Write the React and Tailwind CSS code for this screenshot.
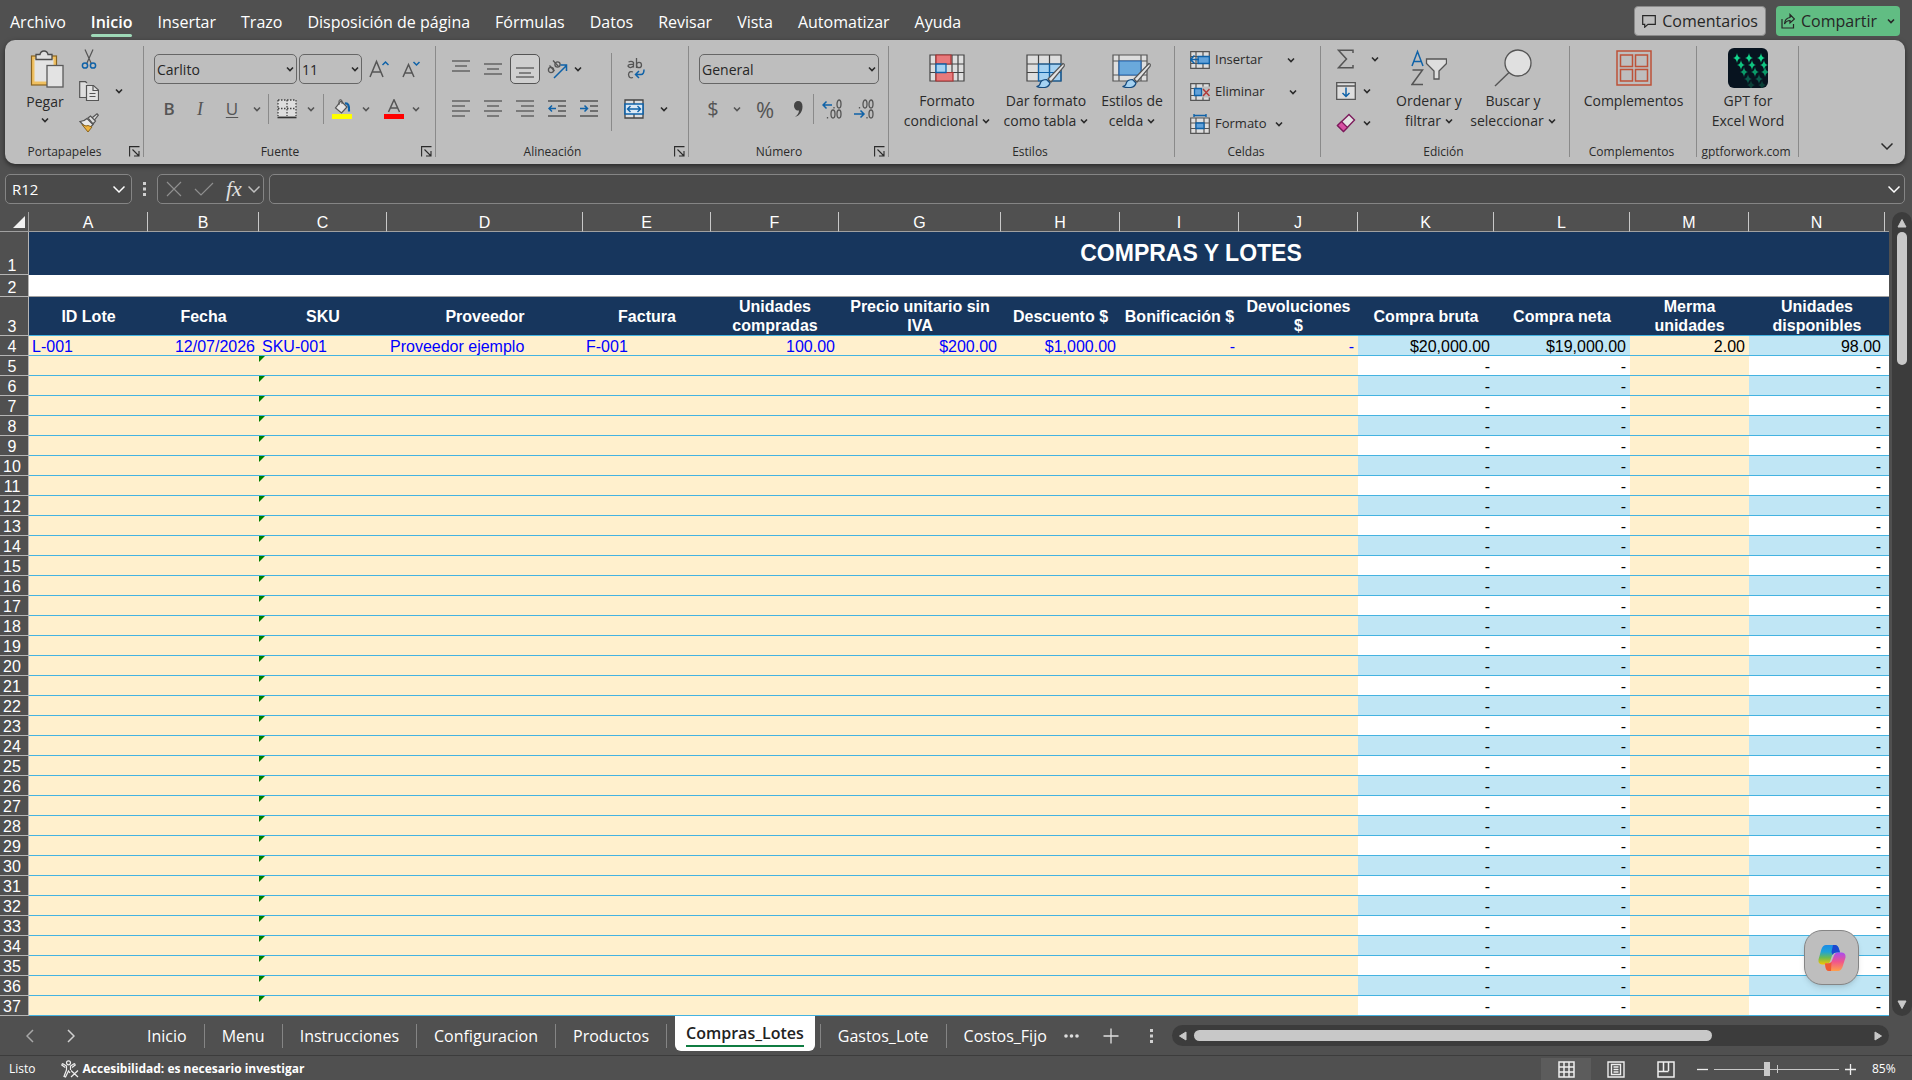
import React from "react";

const INK = "#555555";
const BLUE = "#0f62a8";

const Chevron = ({ className = "" }) => (
  <svg className={`h-2 w-2 shrink-0 ${className}`} viewBox="0 0 8 8" fill="none" stroke="currentColor" strokeWidth="1.6">
    <path d="M1 2.5 4 5.5 7 2.5" />
  </svg>
);

const BigChevron = ({ className = "" }) => (
  <svg className={`h-3 w-3 shrink-0 ${className}`} viewBox="0 0 12 12" fill="none" stroke="currentColor" strokeWidth="1.5">
    <path d="M.5 3.5 6 9l5.5-5.5" />
  </svg>
);

const Launcher = () => (
  <button aria-label="Más opciones" className="absolute right-1 bottom-[7px] text-[#2a2a2a]">
    <svg className="h-[11px] w-[11px]" viewBox="0 0 11 11" fill="none" stroke="currentColor" strokeWidth="1.1">
      <path d="M.6 10.5V.6h9.9M3.5 3.5l6 6M10 5v5H5" />
    </svg>
  </button>
);

const Svg = ({ w = 20, h = 20, box, children }) => (
  <svg width={w} height={h} viewBox={box || `0 0 ${w} ${h}`} fill="none" className="shrink-0">
    {children}
  </svg>
);

const PasteIcon = () => (
  <Svg w={34} h={38}>
    <rect x="1.5" y="6" width="25" height="29" fill="#f0c060" stroke="#8a6420" strokeWidth="1.2" />
    <rect x="4.500" y="9" width="19" height="22.500" fill="#e3e3e3" />
    <path d="M6 9.500V4.500h4C10.500 2 12 1 14 1s3.500 1 4 3.500h4v5z" fill="#dedede" stroke="#4b4b4b" strokeWidth="1.300" />
    <rect x="17" y="15.500" width="16" height="21.500" fill="#e3e3e3" stroke="#5a5a5a" strokeWidth="1.300" />
  </Svg>
);

const CutIcon = () => (
  <Svg w={16} h={20}>
    <path d="M4 .5 10.500 15M12 .5 5.500 15" stroke={INK} strokeWidth="1.200" />
    <circle cx="4" cy="16.500" r="2.600" stroke={BLUE} strokeWidth="1.500" />
    <circle cx="12" cy="16.500" r="2.600" stroke={BLUE} strokeWidth="1.500" />
  </Svg>
);

const CopyIcon = () => (
  <Svg>
    <path d="M7 16.500H.7V.7h5.800L8 2" fill="#dedede" stroke={INK} strokeWidth="1.200" />
    <path d="M7.500 4.500h7l5 4.500v10.500h-12z" fill="#e3e3e3" stroke={INK} strokeWidth="1.200" />
    <path d="M14 4.500v5h5M10.500 12.500h6M10.500 15.500h6" stroke={INK} strokeWidth="1.200" />
  </Svg>
);

const BrushIcon = () => (
  <Svg>
    <path d="M1 8.500 9 17l5-5.500L8 5.500C6 7.500 3.500 8.500 1 8.500z" fill="#e8e8e8" stroke={INK} strokeWidth="1.200" />
    <path d="M3 11.500 9 19l4-5-4-1.500-2 .5z" fill="#eeb23c" stroke="#8a6420" />
    <path d="m9 5 2.500-2 5 5-2.500 3zM13.500 4.500 18 .8l1.300 1.400L15.500 7" fill="#dcdcdc" stroke={INK} strokeWidth="1.200" />
  </Svg>
);

const GrowFont = ({ down }) => (
  <Svg w={20} h={20}>
    <path d={down ? "M1 18 6.500 5.500 12 18M3 14h7" : "M1 18 7.500 2.500 14 18M3.500 13h8"} stroke={INK} strokeWidth="1.500" />
    <path d={down ? "M11.500 3 14.500 6l3-3" : "m13.500 6 3-3 3 3"} stroke={BLUE} strokeWidth="1.500" />
  </Svg>
);

const BordersIcon = () => (
  <Svg>
    <rect x="1" y="1" width="18" height="16" fill="#dedede" />
    <path d="M1 1h18v16M1 1v16M10 1v16M1 9.500h18" stroke="#444" strokeWidth="1.300" strokeDasharray="1.500 1.500" />
    <path d="M.5 18.500h19" stroke="#333" strokeWidth="1.600" />
  </Svg>
);

const FillIcon = () => (
  <Svg>
    <path d="M9 2 15 8 9.500 14 3.500 9z" fill="#e3e3e3" stroke={INK} strokeWidth="1.200" />
    <path d="M7 6V1.500Q8.500-.5 10 1.500V5" stroke={INK} />
    <path d="M13 4.500c3-.5 4.500 2 4 8" stroke={BLUE} strokeWidth="2.200" />
    <path d="M0 15h20v5H0z" fill="#ff0" />
  </Svg>
);

const FontColorIcon = () => (
  <Svg>
    <path d="M4.500 13 10 .8 15.500 13M6.500 9h7" stroke={INK} strokeWidth="1.500" />
    <path d="M0 15h20v5H0z" fill="#f00" />
  </Svg>
);

const Lines = ({ rows }) => (
  <Svg w={18} h={18}>
    {rows.map(([x1, x2, y]) => (
      <path key={y} d={`M${x1} ${y}H${x2}`} stroke={INK} strokeWidth="1.300" />
    ))}
  </Svg>
);

const IndentIcon = ({ right }) => (
  <Svg w={18} h={18}>
    <path d="M0 1h18M10 6h8M10 11h8M0 16h18" stroke={INK} strokeWidth="1.300" />
    <path d={right ? "M0 8.500h7M4.500 5.500l3 3-3 3" : "M8 8.500H1.500M4 5.500 1 8.500l3 3"} stroke={BLUE} strokeWidth="1.500" />
  </Svg>
);

const OrientIcon = () => (
  <Svg w={22} h={22}>
    <g stroke={INK} strokeWidth="1.300">
      <circle cx="5" cy="12" r="2.600" />
      <path d="m3.500 7.500 5 5.500M7 2.500l5.500 6" />
      <circle cx="11.500" cy="6.500" r="2.600" />
    </g>
    <path d="M8 20 20.500 7.500M14.500 7h6v6" stroke={BLUE} strokeWidth="1.500" />
  </Svg>
);

const WrapIcon = () => (
  <Svg w={18} h={22}>
    <g stroke={INK} strokeWidth="1.300">
      <path d="M1.500 4q3-1.500 5 .5v5M6.500 6.500Q1 6 1 8.200 3 11 6.500 8M9.500 0v10" />
      <ellipse cx="12" cy="7" rx="2.500" ry="2.700" />
      <path d="M6 14q-4-1.500-4.500 2.500Q2 21 6 19.500" />
    </g>
    <path d="M17 11.500q0 5-3 5H8.500M12 13l-3.500 3.500L12 20" stroke={BLUE} strokeWidth="1.500" />
  </Svg>
);

const MergeIcon = () => (
  <Svg>
    <path d="M1 1h18v18H1zM10 1v18" fill="#dedede" stroke="#444" strokeWidth="1.300" />
    <path d="M1 5h18v10H1z" fill="#dbe9f5" stroke={BLUE} strokeWidth="1.600" />
    <path d="M3.500 10h13M6.500 7l-3 3 3 3M13.500 7l3 3-3 3" stroke={BLUE} strokeWidth="1.400" />
  </Svg>
);

const DecimalIcon = ({ less }) => (
  <Svg w={20} h={20}>
    <g stroke={INK} strokeWidth="1.300">
      {less ? (
        <>
          <ellipse cx="11" cy="5" rx="2" ry="4" />
          <ellipse cx="17" cy="5" rx="2" ry="4" />
          <ellipse cx="17" cy="15" rx="2" ry="4" />
          <path d="M5.500 8v1.500M13 18v1.500" />
        </>
      ) : (
        <>
          <ellipse cx="17" cy="5" rx="2" ry="4" />
          <ellipse cx="11" cy="15" rx="2" ry="4" />
          <ellipse cx="17" cy="15" rx="2" ry="4" />
          <path d="M12 8v1.500M5.500 18v1.500" />
        </>
      )}
    </g>
    <path d={less ? "M0 15h10M6.500 11.500 10 15l-3.500 3.500" : "M10 6H1M4.500 2.500 1 6l3.500 3.500"} stroke={BLUE} strokeWidth="1.500" />
  </Svg>
);

const ArtBrush = () => (
  <g>
    <path d="M37 9.500 22 25l3 3L38 12.500q1-2.500-1-3z" fill="#e3e3e3" stroke={INK} strokeWidth="1.200" />
    <path d="M10.500 32.500q3 0 4-4 1.500-3 6-3l3.500 3.500q-1 4-5.500 4.500-5 .5-8-1z" fill="#a5d2f2" stroke="#154a7d" strokeWidth="1.200" />
  </g>
);

const ConditionalIcon = () => (
  <Svg w={36} h={28}>
    <rect x="1" y="1" width="34" height="26" fill="#dedede" />
    <path d="M1 1h34v26H1zM7 1v26M23 1v26M29 1v26M1 10h34M1 18.500h34" stroke="#444" strokeWidth="1.200" />
    <path d="M7 1h15v9H7zM7 18.500h17V27H7z" fill="#e8797b" stroke="#a33" strokeWidth="1.200" />
    <path d="M7 10h10v8.500H7z" fill="#a5d2f2" stroke={BLUE} strokeWidth="1.300" />
  </Svg>
);

const TableStyleIcon = () => (
  <Svg w={40} h={40} box="0 -6 40 40">
    <path d="M1 1h34v26H1z" fill="#dedede" />
    <path d="M12 10h23v17H12z" fill="#a5d2f2" />
    <path d="M1 1h34v26H1zM12.500 1v26M23.500 1v26M1 10h34M1 18.500h34" stroke="#444" strokeWidth="1.200" />
    <path d="M12.500 10H35v17H12.500zM23.500 10v17M12.500 18.500H35" stroke={BLUE} strokeWidth="1.200" />
    <ArtBrush />
  </Svg>
);

const CellStyleIcon = () => (
  <Svg w={40} h={40} box="0 -6 40 40">
    <path d="M1 1h34v26H1zM7 1v26M29 1v26M1 7h34M1 21h34" fill="#dedede" stroke={INK} strokeWidth="1.200" />
    <path d="M7 7h22v14H7z" fill="#6aa9dc" stroke="#2565ae" strokeWidth="1.200" />
    <ArtBrush />
  </Svg>
);

const CellIcon = ({ kind }) => (
  <Svg>
    <path d={kind === "format" ? "M.7 4h18.600v15.300H.7zM.7 9h18.600M.7 14.500h18.600M6 4v15M14 4v15" : "M.7 1.700h18.600v16.600H.7zM.7 6.500h18.600M.7 13.500h18.600M6 1.700v16.600M13 1.700v16.600"} fill="#dedede" stroke={INK} strokeWidth="1.200" />
    {kind === "insert" && (
      <>
        <path d="M8 6.500h11.300v7H8z" fill="#62a2da" stroke={BLUE} strokeWidth="1.300" />
        <path d="M9 9.500H1M4.500 5.500l-4 4 4 4" stroke={BLUE} strokeWidth="1.600" />
      </>
    )}
    {kind === "delete" && (
      <>
        <path d="M12 4.500h8v11h-8z" fill="#bebebe" />
        <path d="M4.500 6.500h7v7h-7z" fill="#62a2da" stroke={BLUE} strokeWidth="1.300" />
        <path d="m13 7 6.500 7M19.500 7 13 14" stroke="#b03a3a" strokeWidth="1.500" />
      </>
    )}
    {kind === "format" && (
      <>
        <path d="M6 9h8v5.500H6z" fill="#62a2da" stroke={BLUE} strokeWidth="1.300" />
        <path d="M4 1.500h12M4 0v3M16 0v3" stroke={BLUE} strokeWidth="1.400" />
      </>
    )}
  </Svg>
);

const SumIcon = () => (
  <Svg w={18} h={20}>
    <path d="M16 4V1.200H1.500L9.500 10l-8 8.800H16V16" stroke={INK} strokeWidth="1.500" />
  </Svg>
);

const FillDownIcon = () => (
  <Svg>
    <path d="M.7 1.700h18.600v16.600H.7zM.7 5h18.600" fill="#dedede" stroke={INK} strokeWidth="1.300" />
    <path d="M10 6.500v9M6.500 12l3.500 3.500 3.500-3.500" stroke={BLUE} strokeWidth="1.500" />
  </Svg>
);

const EraserIcon = () => (
  <Svg>
    <path d="M13 1.500 18.500 7 7.500 18.500 1.500 12.500z" fill="#e3e3e3" stroke="#7c1a5b" strokeWidth="1.400" />
    <path d="M5.500 8.500 11.500 14.500 7.500 18.500 1.500 12.500z" fill="#d850a4" stroke="#7c1a5b" strokeWidth="1.200" />
  </Svg>
);

const SortIcon = () => (
  <Svg w={36} h={38}>
    <path d="M1 17 6.500 2.500 12 17M3 12.500h7" stroke={BLUE} strokeWidth="1.500" />
    <path d="M1.500 21h10L1 35.500h11" stroke={INK} strokeWidth="1.500" />
    <path d="M15.500 10h20v4.500L28 22v8h-5v-8l-7.500-7.500z" fill="#dedede" stroke={INK} strokeWidth="1.300" />
  </Svg>
);

const SearchIcon = () => (
  <Svg w={38} h={38}>
    <circle cx="24" cy="14" r="13" fill="#e0e0e0" stroke={INK} strokeWidth="1.300" />
    <path d="M15 23.500 1 37" stroke={INK} strokeWidth="1.400" />
  </Svg>
);

const AddinsIcon = () => (
  <Svg w={36} h={36}>
    <path d="M1 1h34v34H1zM4.500 5h12v11.500h-12zM19.500 5h12v11.500h-12zM4.500 19.500h12V31h-12zM19.500 19.500h12V31h-12z" stroke="#bd5238" strokeWidth="1.500" />
  </Svg>
);

const STARS = [
  [9, 10, "#12d68c"], [21, 10, "#12d68c"], [33, 10, "#12d68c"],
  [13, 17, "#0fc480"], [24, 17, "#0fc480"], [36, 17, "#0fc480"],
  [16, 24, "#0a9a68"], [27, 24, "#0a9a68"], [37, 24, "#0a9a68"],
  [20, 31, "#0a5c4c"], [31, 31, "#0a5c4c"],
  [23, 37, "#0a4038"], [34, 37, "#0a4038"],
];

const GptIcon = () => (
  <Svg w={40} h={40}>
    <clipPath id="gpt-clip"><rect width="40" height="40" rx="6" /></clipPath>
    <g clipPath="url(#gpt-clip)">
      <rect width="40" height="40" fill="#07131f" />
      {STARS.map(([x, y, c]) => (
        <path key={`${x}-${y}`} d={`M${x} ${y - 5}q.6 4.400 4 5-3.400.6-4 5-.6-4.400-4-5 3.400-.6 4-5z`} fill={c} />
      ))}
    </g>
  </Svg>
);

const CopilotIcon = () => (
  <Svg w={28} h={26}>
    <defs>
      <linearGradient id="cp-a" x1="0" y1="0" x2="0" y2="1">
        <stop offset="0" stopColor="#1c8be6" />
        <stop offset=".35" stopColor="#1fa3d8" />
        <stop offset=".65" stopColor="#6cbb52" />
        <stop offset="1" stopColor="#f5c400" />
      </linearGradient>
      <linearGradient id="cp-b" x1="0" y1="0" x2="0" y2="1">
        <stop offset="0" stopColor="#a84df0" />
        <stop offset=".5" stopColor="#f0558c" />
        <stop offset="1" stopColor="#ffa04a" />
      </linearGradient>
    </defs>
    <path d="M8 0h9q3 0 4 4l1 3.500h-4q-3 0-4 3l-2 6q-1 3-4 3H4q-4-.5-3.500-5L3.500 4Q5 0 8 0z" fill="url(#cp-a)" />
    <path d="M15 0h2.500q2.500.5 3.500 4l1 3.500h-4q-2.500 0-3.500 2.500l-1-3z" fill="#1d48cf" />
    <path d="M20 26h-9q-3 0-3.500-4L7 18.500h3q3 0 4-3l2-5q1-3 4-3h4q4 .5 3.500 5L24.500 22q-1.500 4-4.500 4z" fill="url(#cp-b)" />
    <path d="M13 26h-2q-3 0-3.500-4L7 18.500h3q2 0 3.500-1.500z" fill="#ee5a34" />
  </Svg>
);

const TABS = ["Archivo", "Inicio", "Insertar", "Trazo", "Disposición de página", "Fórmulas", "Datos", "Revisar", "Vista", "Automatizar", "Ayuda"];

const Group = ({ label, className, launcher, children }) => (
  <section aria-label={label} className={`relative flex shrink-0 flex-col ${className}`}>
    <div className="flex h-[102px]">{children}</div>
    <div className={`text-center text-xs leading-5 text-[#2a2a2a] ${launcher ? "pr-5" : "pr-1"}`}>{label}</div>
    {launcher && <Launcher />}
    <span className="absolute top-1.5 right-0 bottom-[7px] w-px bg-[#8a8a8a]" />
  </section>
);

const Tool = ({ label, className = "w-8", children }) => (
  <button aria-label={label} className={`flex h-[30px] shrink-0 items-center justify-center ${className}`}>{children}</button>
);

const Drop = ({ className = "w-[18px]" }) => <Tool label="Desplegar" className={className}><Chevron /></Tool>;

const Sep = ({ className = "h-[30px]" }) => <span className={`w-px shrink-0 bg-[#8a8a8a] ${className}`} />;

const Combo = ({ label, value, className }) => (
  <label className={`relative block h-[30px] ${className}`}>
    <select aria-label={label} defaultValue={value} className="h-full w-full appearance-none rounded-[5px] border border-[#666] bg-transparent px-0.5 pt-0.5 text-sm text-[#262626]">
      <option>{value}</option>
    </select>
    <Chevron className="pointer-events-none absolute top-[11px] right-[3px]" />
  </label>
);

const BigButton = ({ icon, lines, drop, className }) => (
  <button className={`flex shrink-0 flex-col items-center text-sm leading-5 text-[#2a2a2a] ${className}`}>
    <span className="flex h-[46px] items-center justify-center">{icon}</span>
    {lines.map((line, i) => (
      <span key={line} className="flex items-center gap-1 whitespace-nowrap">
        {line}
        {drop && i === lines.length - 1 && <Chevron />}
      </span>
    ))}
  </button>
);

const CellButton = ({ icon, label, gap }) => (
  <button className={`flex h-8 items-center text-[13px] text-[#2a2a2a] ${gap}`}>
    <span className="flex items-center gap-[5px]">{icon}{label}</span>
    <Chevron />
  </button>
);

function Ribbon() {
  return (
    <div className="mr-[7px] ml-[5px] flex h-[124px] shrink-0 rounded-[10px] bg-[#bebebe] text-[#2a2a2a] shadow-[0_2px_5px_rgba(0,0,0,0.5)]">
      <Group label="Portapapeles" className="w-[139px]" launcher>
        <button className="ml-5 flex w-10 flex-col items-center pt-2.5 text-sm leading-5">
          <span className="pl-1"><PasteIcon /></span>
          <span className="pt-1">Pegar</span>
          <Chevron className="mt-1" />
        </button>
        <div className="ml-3.5 flex flex-col pt-1">
          <Tool label="Cortar" className="w-5"><CutIcon /></Tool>
          <div className="flex pt-0.5"><Tool label="Copiar" className="w-5"><CopyIcon /></Tool><Drop className="w-10" /></div>
          <Tool label="Copiar formato" className="mt-0.5 w-5"><BrushIcon /></Tool>
        </div>
      </Group>

      <Group label="Fuente" className="w-[292px]" launcher>
        <div className="flex flex-col gap-2.5 pt-3.5 pl-2.5">
          <div className="flex">
            <Combo label="Fuente" value="Carlito" className="w-[143px]" />
            <Combo label="Tamaño de fuente" value="11" className="ml-0.5 w-[63px]" />
            <Tool label="Aumentar tamaño" className="w-[34px]"><GrowFont /></Tool>
            <Tool label="Disminuir tamaño"><GrowFont down /></Tool>
          </div>
          <div className="flex text-[17px] text-[#555]">
            <Tool label="Negrita" className="w-[30px]"><b className="font-semibold">B</b></Tool>
            <Tool label="Cursiva"><i className="font-['Liberation_Serif',serif] text-lg">I</i></Tool>
            <Tool label="Subrayado"><u className="underline-offset-2">U</u></Tool>
            <Drop />
            <Sep className="ml-0.5 h-[30px]" />
            <Tool label="Bordes" className="ml-1.5 w-6"><BordersIcon /></Tool>
            <Drop className="w-6" />
            <Sep />
            <Tool label="Color de relleno" className="ml-1.5 w-6"><FillIcon /></Tool>
            <Drop className="w-6" />
            <Tool label="Color de fuente" className="ml-1 w-6"><FontColorIcon /></Tool>
            <Drop className="w-5" />
          </div>
        </div>
      </Group>

      <Group label="Alineación" className="w-[253px]" launcher>
        <div className="flex flex-col gap-2.5 pt-3.5 pl-[9px]">
          <div className="flex">
            <Tool label="Alinear arriba"><Lines rows={[[0, 18, 1], [3, 15, 6], [0, 18, 11]]} /></Tool>
            <Tool label="Alinear en medio"><Lines rows={[[0, 18, 4], [3, 15, 9], [0, 18, 14]]} /></Tool>
            <Tool label="Alinear abajo" className="mx-px w-[30px] rounded-[5px] border border-[#555] bg-[#cfcfcf]"><Lines rows={[[0, 18, 8], [3, 15, 13], [0, 18, 17]]} /></Tool>
            <Tool label="Orientación"><OrientIcon /></Tool>
            <Drop className="w-2.5" />
          </div>
          <div className="flex">
            <Tool label="Alinear a la izquierda"><Lines rows={[[0, 18, 1], [0, 13, 6], [0, 18, 11], [0, 13, 16]]} /></Tool>
            <Tool label="Centrar"><Lines rows={[[0, 18, 1], [3, 15, 6], [0, 18, 11], [3, 15, 16]]} /></Tool>
            <Tool label="Alinear a la derecha"><Lines rows={[[0, 18, 1], [5, 18, 6], [0, 18, 11], [5, 18, 16]]} /></Tool>
            <Tool label="Disminuir sangría"><IndentIcon /></Tool>
            <Tool label="Aumentar sangría"><IndentIcon right /></Tool>
          </div>
        </div>
        <Sep className="mt-[13px] ml-1.5 h-[78px]" />
        <div className="flex flex-col gap-2.5 pt-3.5 pl-1.5">
          <Tool label="Ajustar texto" className="w-9"><WrapIcon /></Tool>
          <div className="flex"><Tool label="Combinar y centrar"><MergeIcon /></Tool><Drop className="w-7" /></div>
        </div>
      </Group>

      <Group label="Número" className="w-[200px]" launcher>
        <div className="flex flex-col gap-2.5 pt-3.5 pl-2.5">
          <Combo label="Formato de número" value="General" className="w-[180px]" />
          <div className="flex text-xl text-[#555]">
            <Tool label="Moneda" className="w-7">$</Tool>
            <Drop className="w-5" />
            <Tool label="Porcentaje" className="w-9 text-[22px]">%</Tool>
            <Tool label="Millares" className="w-[30px]">
              <Svg w={10} h={18}><path d="M1 5.500C1 2.500 3 1 5 1c3 0 4.500 2 4.500 5.500C9.500 11.500 7 15.500 2 17c2.500-2 4-4 4-6.500-3 .5-5-2-5-5z" fill="#444" /></Svg>
            </Tool>
            <Sep />
            <Tool label="Aumentar decimales" className="ml-0.5 w-8"><DecimalIcon /></Tool>
            <Tool label="Disminuir decimales"><DecimalIcon less /></Tool>
          </div>
        </div>
      </Group>

      <Group label="Estilos" className="w-[286px]">
        <div className="flex pt-[5px] pl-2">
          <BigButton icon={<ConditionalIcon />} lines={["Formato", "condicional"]} drop className="w-[100px]" />
          <BigButton icon={<TableStyleIcon />} lines={["Dar formato", "como tabla"]} drop className="w-[98px]" />
          <BigButton icon={<CellStyleIcon />} lines={["Estilos de", "celda"]} drop className="w-[74px]" />
        </div>
      </Group>

      <Group label="Celdas" className="w-[146px]">
        <div className="flex flex-col items-start pt-1 pl-[15px]">
          <CellButton icon={<CellIcon kind="insert" />} label="Insertar" gap="gap-6" />
          <CellButton icon={<CellIcon kind="delete" />} label="Eliminar" gap="gap-6" />
          <CellButton icon={<CellIcon kind="format" />} label="Formato" gap="gap-2" />
        </div>
      </Group>

      <Group label="Edición" className="w-[249px]">
        <div className="flex flex-col pt-1 pl-[15px]">
          <div className="flex h-8"><Tool label="Autosuma" className="w-5"><SumIcon /></Tool><Drop className="w-[38px]" /></div>
          <div className="flex h-8"><Tool label="Rellenar" className="w-5"><FillDownIcon /></Tool><Drop className="w-[22px]" /></div>
          <div className="flex h-8"><Tool label="Borrar" className="w-5"><EraserIcon /></Tool><Drop className="w-[22px]" /></div>
        </div>
        <div className="flex pt-[5px]">
          <BigButton icon={<SortIcon />} lines={["Ordenar y", "filtrar"]} drop className="w-[70px]" />
          <BigButton icon={<SearchIcon />} lines={["Buscar y", "seleccionar"]} drop className="w-[98px]" />
        </div>
      </Group>

      <Group label="Complementos" className="w-[127px]">
        <div className="flex pt-[5px]"><BigButton icon={<AddinsIcon />} lines={["Complementos"]} className="w-[127px]" /></div>
      </Group>

      <Group label="gptforwork.com" className="w-[102px]">
        <div className="flex pt-[5px]"><BigButton icon={<GptIcon />} lines={["GPT for", "Excel Word"]} className="w-[102px]" /></div>
      </Group>

      <button aria-label="Contraer cinta" className="ml-auto self-end p-3"><BigChevron /></button>
    </div>
  );
}

const COLS = [
  { id: "A", w: 119, head: "ID Lote", first: "L-001" },
  { id: "B", w: 111, head: "Fecha", first: "12/07/2026", num: true },
  { id: "C", w: 128, head: "SKU", first: "SKU-001", flag: true },
  { id: "D", w: 196, head: "Proveedor", first: "Proveedor ejemplo" },
  { id: "E", w: 128, head: "Factura", first: "F-001" },
  { id: "F", w: 128, head: "Unidades compradas", first: "100.00", num: true },
  { id: "G", w: 162, head: "Precio unitario sin IVA", first: "$200.00", num: true },
  { id: "H", w: 119, head: "Descuento $", first: "$1,000.00", num: true },
  { id: "I", w: 119, head: "Bonificación $", first: "-", num: true },
  { id: "J", w: 119, head: "Devoluciones $", first: "-", num: true },
  { id: "K", w: 136, head: "Compra bruta", first: "$20,000.00", num: true, calc: true },
  { id: "L", w: 136, head: "Compra neta", first: "$19,000.00", num: true, calc: true },
  { id: "M", w: 119, head: "Merma unidades", first: "2.00", num: true, black: true },
  { id: "N", w: 136, head: "Unidades disponibles", first: "98.00", num: true, calc: true },
  { id: "O", w: 468, head: "", first: "", calc: true, blank: true },
];

const ROWS = Array.from({ length: 34 }, (_, i) => i + 4);

const RowHead = ({ n }) => (
  <th scope="row" className="border-r border-b border-[#b5b5b5] bg-[#505050] p-0 pt-0.5 pr-1 align-bottom font-normal leading-[17px] text-white">{n}</th>
);

function Sheet() {
  return (
    <div className="min-w-0 flex-1 overflow-hidden">
      <table className="w-[2353px] table-fixed border-separate border-spacing-0 font-['Liberation_Sans',sans-serif] text-base">
        <colgroup>
          <col style={{ width: 29 }} />
          {COLS.map((c) => <col key={c.id} style={{ width: c.w }} />)}
        </colgroup>
        <thead>
          <tr className="h-5 text-white">
            <th className="border-r border-b border-[#a0a0a0] p-0">
              <svg className="ml-auto mr-[3px] h-3 w-3" viewBox="0 0 12 12"><path d="M12 0v12H0z" fill="#f2f2f2" /></svg>
            </th>
            {COLS.map((c) => (
              <th key={c.id} scope="col" className="border-r border-b border-r-[#c8c8c8] border-b-[#a0a0a0] p-0 pt-0.5 font-normal leading-[17px]">{c.blank ? "" : c.id}</th>
            ))}
          </tr>
        </thead>
        <tbody>
          <tr className="h-[43px]">
            <RowHead n={1} />
            <td colSpan={15} className="bg-[#17365d] p-0 pb-0.5 text-center text-[23px] font-bold leading-7 text-white">COMPRAS Y LOTES</td>
          </tr>
          <tr className="h-[22px]">
            <RowHead n={2} />
            <td colSpan={15} className="border-b border-[#a0a0a0] bg-white p-0" />
          </tr>
          <tr className="h-[39px]">
            <RowHead n={3} />
            {COLS.map((c) => (
              <th key={c.id} className="border-b border-[#44b3e1] bg-[#17365d] p-0 px-[3px] text-center align-middle font-bold leading-[19px] text-white">{c.head}</th>
            ))}
          </tr>
          {ROWS.map((n) => (
            <tr key={n} className="h-5">
              <RowHead n={n} />
              {COLS.map((c) => (
                <td
                  key={c.id}
                  className={`relative overflow-hidden border-b border-[#44b3e1] p-0 pt-0.5 pr-1 pl-[3px] whitespace-nowrap leading-[17px] ${c.num || c.calc ? "text-right" : ""} ${c.calc ? (n % 2 ? "bg-white" : "bg-[#c0e6f5]") : "bg-[#fff0cd]"} ${c.calc || c.black ? "text-black" : "text-[#0000ff]"}`}
                >
                  {n === 4 ? c.first : c.calc && !c.blank ? "-" : ""}
                  {c.flag && n > 4 && (
                    <svg className="absolute top-0 left-0 h-1.5 w-1.5" viewBox="0 0 6 6"><path d="M0 0h6L0 6z" fill="#008000" /></svg>
                  )}
                </td>
              ))}
            </tr>
          ))}
        </tbody>
      </table>
    </div>
  );
}

const Arrow = ({ d }) => (
  <svg className="h-2.5 w-2.5 shrink-0" viewBox="0 0 10 10"><path d={d} fill="#c8c8c8" stroke="#c8c8c8" strokeLinejoin="round" /></svg>
);

const SHEETS_LEFT = ["Inicio", "Menu", "Instrucciones", "Configuracion", "Productos"];

const SheetTab = ({ name, last }) => (
  <>
    <button className="px-[17px] text-base text-white">{name}</button>
    {!last && <span className="h-6 w-px bg-[#858585]" />}
  </>
);

export default function App() {
  return (
    <div className="flex h-screen flex-col overflow-hidden bg-[#505050] font-['Open_Sans',sans-serif]">
      <header className="flex h-10 shrink-0 items-stretch text-base text-white">
        <nav className="flex gap-[25px] pl-2.5">
          {TABS.map((t) => (
            <button key={t} className={`flex flex-col pt-2.5 leading-6 whitespace-nowrap ${t === "Inicio" ? "font-semibold" : ""}`}>
              {t}
              {t === "Inicio" && <span className="h-[3px] w-full rounded bg-[#9fd9b8]" />}
            </button>
          ))}
        </nav>
        <div className="ml-auto flex gap-2.5 pt-1.5 pr-3 text-[#262626]">
          <button className="flex h-[30px] items-center gap-1.5 rounded border border-[#8a8a8a] bg-[#bebebe] px-[7px]">
            <Svg w={14} h={14}><path d="M.7 1.700h12.600v8.600H6L2.700 13.200v-2.900h-2z" stroke="#262626" strokeWidth="1.200" /></Svg>
            Comentarios
          </button>
          <button className="flex h-[30px] items-center gap-1.5 rounded bg-[#61bd83] px-[5px]">
            <Svg w={14} h={16}><path d="M1 6v9h11.500v-4M3.500 11Q4 5 9 4.500V1.500L13.500 6 9 10V7.500Q5.500 7.500 3.500 11z" stroke="#262626" strokeWidth="1.200" /></Svg>
            Compartir
            <Chevron className="ml-1" />
          </button>
        </div>
      </header>

      <Ribbon />

      <div className="flex h-12 shrink-0 items-center pt-0.5 pr-[7px] pl-[5px] text-white">
        <div className="flex h-[30px] w-[127px] items-center rounded-[5px] border border-[#858585] bg-[#4a4a4a] pr-1.5">
          <input aria-label="Cuadro de nombres" defaultValue="R12" className="min-w-0 flex-1 bg-transparent pl-1.5 text-[15px] outline-none" />
          <BigChevron />
        </div>
        <svg className="mx-[11px] h-4 w-[3px]" viewBox="0 0 3 16" fill="#d0d0d0"><path d="M0 1h3v3H0zM0 6.500h3v3H0zM0 12h3v3H0z" /></svg>
        <div className="flex h-[30px] w-[107px] items-center rounded-[5px] border border-[#858585] bg-[#4a4a4a] pl-2">
          <button aria-label="Cancelar"><Svg w={16} h={16}><path d="m1 1 14 14M15 1 1 15" stroke="#8f8f8f" strokeWidth="1.200" /></Svg></button>
          <button aria-label="Introducir" className="ml-3"><Svg w={20} h={16}><path d="m1 8 6 6L19 2" stroke="#8f8f8f" strokeWidth="1.200" /></Svg></button>
          <button aria-label="Insertar función" className="ml-3 font-['Liberation_Serif',serif] text-[22px] leading-6 italic text-[#e0e0e0]">fx</button>
          <BigChevron className="ml-1.5 text-[#c0c0c0]" />
        </div>
        <div className="ml-[5px] flex h-[30px] flex-1 items-center rounded-[5px] border border-[#858585] bg-[#4a4a4a] pr-1">
          <input aria-label="Barra de fórmulas" className="min-w-0 flex-1 bg-transparent px-2 text-[15px] outline-none" />
          <BigChevron />
        </div>
      </div>

      <main className="relative flex min-h-0 flex-1">
        <Sheet />
        <div className="ml-[3px] flex w-5 shrink-0 flex-col items-center gap-1 rounded-full bg-[#3c3c3c] py-1.5">
          <Arrow d="M5 1.500 9 9H1z" />
          <div className="h-[133px] w-2.5 rounded-full bg-[#c8c8c8]" />
          <span className="flex-1" />
          <Arrow d="M5 8.500 9 1H1z" />
        </div>
        <button aria-label="Copilot" className="absolute right-[53px] bottom-[31px] flex h-[55px] w-[55px] items-center justify-center rounded-[18px] border border-[#858585] bg-[#bebebe] shadow-md">
          <CopilotIcon />
        </button>
      </main>

      <div className="flex h-10 shrink-0 items-center border-b border-[#3c3c3c] pr-[23px] text-white">
        <button aria-label="Hoja anterior" className="ml-[26px] text-[#a8a8a8]"><Svg w={8} h={14}><path d="M7 1 1 7l6 6" stroke="currentColor" strokeWidth="1.500" /></Svg></button>
        <button aria-label="Hoja siguiente" className="mr-[55px] ml-[33px] text-[#d0d0d0]"><Svg w={8} h={14}><path d="m1 1 6 6-6 6" stroke="currentColor" strokeWidth="1.500" /></Svg></button>
        {SHEETS_LEFT.map((n) => <SheetTab key={n} name={n} />)}
        <button className="mr-[5px] ml-2 flex h-[35px] items-center self-start rounded-b-md bg-white px-[11px] text-base font-semibold text-[#222]">
          <span className="block border-b-2 border-[#107c41] leading-6">Compras_Lotes</span>
        </button>
        <span className="h-6 w-px bg-[#858585]" />
        <SheetTab name="Gastos_Lote" />
        <SheetTab name="Costos_Fijo" last />
        <button aria-label="Más hojas"><Svg w={15} h={4}><circle cx="2" cy="2" r="1.800" fill="#ddd" /><circle cx="7.500" cy="2" r="1.800" fill="#ddd" /><circle cx="13" cy="2" r="1.800" fill="#ddd" /></Svg></button>
        <button aria-label="Hoja nueva" className="ml-6"><Svg w={16} h={16}><path d="M8 .5v15M.5 8h15" stroke="#e0e0e0" strokeWidth="1.300" /></Svg></button>
        <svg className="mr-[19px] ml-[31px] h-4 w-[3px]" viewBox="0 0 3 16" fill="#d0d0d0"><path d="M0 1h3v3H0zM0 6.500h3v3H0zM0 12h3v3H0z" /></svg>
        <div className="flex h-[21px] flex-1 items-center gap-1.5 rounded-full bg-[#3c3c3c] px-1.5">
          <Arrow d="M1.500 5 8 1v8z" />
          <div className="flex flex-1"><div className="h-[11px] w-[77%] rounded-full bg-[#c8c8c8]" /></div>
          <Arrow d="M8.500 5 2 1v8z" />
        </div>
      </div>

      <footer className="flex h-6 shrink-0 items-center pt-0.5 pr-3.5 pl-[9px] text-xs text-white">
        <span>Listo</span>
        <button className="ml-[25px] flex items-center gap-1 font-bold">
          <Svg w={18} h={18}>
            <g stroke="#eee" strokeWidth="1.200">
              <circle cx="7.500" cy="2.800" r="2" />
              <path d="M1.500 3.500 5.500 6v4L3 16.500l1.500.5 3-6 1.500 2M13.500 3.500 9.500 6v4M1.500 3.500 .8 5l3.500 2.500M13.500 3.500l.7 1.500-3.200 2.500M10 10.500l7 6.500M17 10.500 10 17" />
            </g>
          </Svg>
          Accesibilidad: es necesario investigar
        </button>
        <div className="ml-auto flex h-full items-center">
          <button aria-label="Normal" className="flex h-full w-[50px] items-center justify-center bg-[#5c5c5c]"><Svg w={17} h={17}><path d="M1 1h15v15H1zM6 1v15M11 1v15M1 6h15M1 11h15" stroke="#eee" strokeWidth="1.500" /></Svg></button>
          <button aria-label="Diseño de página" className="flex h-full w-[50px] items-center justify-center"><Svg w={18} h={17}><path d="M1 1h16v15H1zM4.500 3.500h9v10h-9zM6.500 6h5M6.500 8.500h5M6.500 11h5" stroke="#eee" strokeWidth="1.400" /></Svg></button>
          <button aria-label="Salto de página" className="flex h-full w-[50px] items-center justify-center"><Svg w={18} h={17}><path d="M1 1h16v15H1zM6.500 1v9M11.500 1v9M1 10.500h10.500" stroke="#eee" strokeWidth="1.500" /></Svg></button>
          <button aria-label="Alejar" className="ml-1.5"><Svg w={11} h={11}><path d="M0 5.500h11" stroke="#eee" strokeWidth="1.300" /></Svg></button>
          <label className="relative mx-1.5 flex w-[125px] items-center">
            <input
              type="range" aria-label="Zoom" min="10" max="190" defaultValue="85"
              className="h-4 w-full appearance-none bg-transparent [&::-webkit-slider-runnable-track]:h-px [&::-webkit-slider-runnable-track]:bg-[#c8c8c8] [&::-webkit-slider-thumb]:-mt-[7px] [&::-webkit-slider-thumb]:h-3.5 [&::-webkit-slider-thumb]:w-1.5 [&::-webkit-slider-thumb]:appearance-none [&::-webkit-slider-thumb]:bg-[#c8c8c8]"
            />
            <span className="absolute left-1/2 h-2 w-px bg-[#c8c8c8]" />
          </label>
          <button aria-label="Acercar"><Svg w={11} h={11}><path d="M0 5.500h11M5.500 0v11" stroke="#eee" strokeWidth="1.300" /></Svg></button>
          <button className="ml-4 w-[26px] text-left">85%</button>
        </div>
      </footer>
    </div>
  );
}
